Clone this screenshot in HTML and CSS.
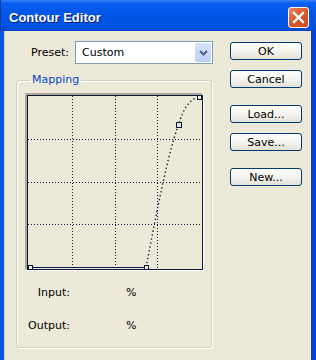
FILE: index.html
```html
<!DOCTYPE html>
<html>
<head>
    <title>Contour Editor</title>
    <link rel="stylesheet" href="styles.css">
</head>
<body>
    <div class="window">
        <div class="titlebar">
            <span class="title">Contour Editor</span>
            <span class="close">
                <svg width="19" height="19" viewBox="0 0 19 19">
                    <path d="M5 5 L14 14 M14 5 L5 14" stroke="#fff" stroke-width="2.4" stroke-linecap="square"/>
                </svg>
            </span>
        </div>
        <div class="frame">
            <div class="main">
                <div class="preset-row">
                    <span class="preset-label">Preset:</span>
                    <div class="select">
                        <span class="select-value">Custom</span>
                        <span class="drop">
                            <svg width="9" height="6" viewBox="0 0 9 6">
                                <path d="M1 1 L4.5 4.5 L8 1" fill="none" stroke="#4d6185" stroke-width="2"/>
                            </svg>
                        </span>
                    </div>
                </div>

                <fieldset class="mapping">
                    <legend>Mapping</legend>
                    <svg class="graph" width="179" height="178" viewBox="0 0 179 178">
                        <!-- sunken frame -->
                        <rect x="0" y="0" width="177" height="2" fill="#aca899"/>
                        <rect x="0" y="0" width="2" height="176" fill="#aca899"/>
                        <rect x="178" y="0" width="1" height="178" fill="#fff"/>
                        <rect x="0" y="177" width="179" height="1" fill="#fff"/>
                        <rect x="2.5" y="2.5" width="175" height="174" fill="none" stroke="#0a1a3a"/>
                        <!-- grid -->
                        <g stroke="#0a1a4a" stroke-dasharray="1 2">
                            <line x1="47.5" y1="3" x2="47.5" y2="176"/>
                            <line x1="90.5" y1="3" x2="90.5" y2="176"/>
                            <line x1="132.5" y1="3" x2="132.5" y2="176"/>
                            <line x1="3" y1="46.5" x2="177" y2="46.5"/>
                            <line x1="3" y1="89.5" x2="177" y2="89.5"/>
                            <line x1="3" y1="131.5" x2="177" y2="131.5"/>
                        </g>
                        <!-- contour -->
                        <line x1="5" y1="174.5" x2="121" y2="174.5" stroke="#0a1a3a"/>
                        <path d="M121 174 C128 140 140 70 153.5 31.5 C158 17 164 6 174 4" fill="none" stroke="#0a1a3a" stroke-width="1.4" stroke-dasharray="1.4 2.6"/>
                        <g fill="#ece9d8" stroke="#0a1a3a">
                            <rect x="3.5" y="172.5" width="4" height="4"/>
                            <rect x="119.5" y="172.5" width="4" height="4"/>
                            <rect x="151.5" y="29.5" width="5" height="5"/>
                            <rect x="172.5" y="2.5" width="4" height="4"/>
                        </g>
                    </svg>
                    <div class="readout readout-input">
                        <span class="readout-label">Input:</span>
                        <span class="readout-unit">%</span>
                    </div>
                    <div class="readout readout-output">
                        <span class="readout-label">Output:</span>
                        <span class="readout-unit">%</span>
                    </div>
                </fieldset>
            </div>

            <div class="buttons">
                <button>OK</button>
                <button class="gap-sm">Cancel</button>
                <button class="gap-lg">Load...</button>
                <button class="gap-sm">Save...</button>
                <button class="gap-lg">New...</button>
            </div>
        </div>
    </div>
</body>
</html>
```

FILE: styles.css
```css
body {
    margin: 0;
    font-family: "DejaVu Sans", Tahoma, sans-serif;
    font-size: 11px;
    color: #000;
    background: #ece9d8;
}
.window {
    width: 316px;
    height: 360px;
    overflow: hidden;
}
.titlebar {
    height: 31px;
    box-sizing: border-box;
    display: flex;
    align-items: center;
    justify-content: space-between;
    padding: 3px 7px 0 8px;
    background: linear-gradient(#3a84f8 0, #0b5ef0 3px, #0057e8 40%, #0053e0 85%, #0045cc 100%);
    border-left: 1px solid #0a3aa8;
}
.title {
    font-family: "Liberation Sans", Arial, sans-serif;
    font-weight: bold;
    font-size: 13px;
    color: #fff;
    text-shadow: 1px 1px 0 #0a1883;
}
.close {
    width: 21px;
    height: 21px;
    box-sizing: border-box;
    display: flex;
    align-items: center;
    justify-content: center;
    border: 1px solid #fff;
    border-radius: 3px;
    background: linear-gradient(135deg, #e8845f 0, #dc5b33 45%, #c8481f 100%);
}
.frame {
    height: 329px;
    display: flex;
    background: #ece9d8;
    border-left: 4px solid #0855e2;
    border-right: 5px solid #0a3fd2;
    box-shadow: inset 1px 0 0 #d4d0c3;
}
.main {
    width: 209px;
}
.preset-row {
    display: flex;
    align-items: center;
    margin-top: 10px;
    padding-left: 27px;
}
.preset-label {
    width: 44px;
}
.select {
    width: 138px;
    height: 23px;
    box-sizing: border-box;
    display: flex;
    align-items: center;
    justify-content: space-between;
    background: #fff;
    border: 1px solid #7f9db9;
}
.select-value {
    padding-left: 6px;
}
.drop {
    width: 16px;
    height: 19px;
    margin-right: 1px;
    display: flex;
    align-items: center;
    justify-content: center;
    border-radius: 2px;
    background: linear-gradient(#d6e3fd, #bccffa);
}
.mapping {
    margin: 9px 0 0 12px;
    width: 196px;
    height: 275px;
    box-sizing: border-box;
    padding: 0 0 0 8px;
    min-width: 0;
    border: 1px solid #d0d0bf;
    border-radius: 3px;
    box-shadow: 1px 1px 0 #fff, inset 1px 1px 0 #fff;
}
.mapping legend {
    margin-left: 5px;
    padding: 0 2px;
    line-height: 14px;
    color: #0046d5;
}
.graph {
    display: block;
    margin-top: 6px;
}
.readout {
    display: flex;
    line-height: 14px;
}
.readout-input {
    margin-top: 15px;
}
.readout-output {
    margin-top: 19px;
}
.readout-label {
    width: 45px;
    text-align: right;
}
.readout-unit {
    margin-left: 56px;
}
.buttons {
    display: flex;
    flex-direction: column;
    padding-top: 11px;
    margin-left: 17px;
}
button {
    width: 72px;
    height: 18px;
    padding: 0;
    font-family: "DejaVu Sans", Tahoma, sans-serif;
    font-size: 11px;
    color: #000;
    border: 1px solid #003c74;
    border-radius: 3px;
    background: linear-gradient(#fff, #f2f1eb 60%, #e3e0d6);
}
.gap-sm {
    margin-top: 10px;
}
.gap-lg {
    margin-top: 17px;
}
```
